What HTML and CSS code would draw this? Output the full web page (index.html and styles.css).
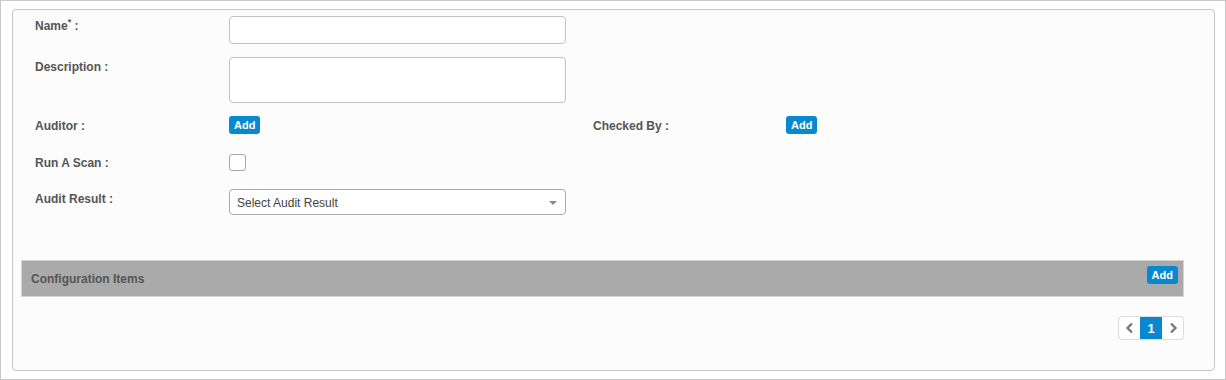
FILE: index.html
```html
<!DOCTYPE html>
<html lang="en">
<head>
  <meta charset="UTF-8">
  <title>Audit</title>
  <link rel="stylesheet" href="styles.css">
</head>
<body>
  <div class="page">
    <div class="panel">
      <!-- Audit form -->
      <div class="form-row row-name">
        <label class="label">Name<sup>*</sup> :</label>
        <input type="text" class="input">
      </div>
      <div class="form-row row-desc">
        <label class="label">Description :</label>
        <textarea class="input textarea"></textarea>
      </div>
      <div class="form-row row-center row-people">
        <label class="label">Auditor :</label>
        <div class="control"><button class="btn-add">Add</button></div>
        <label class="label">Checked By :</label>
        <div class="control"><button class="btn-add">Add</button></div>
      </div>
      <div class="form-row row-center row-scan">
        <label class="label">Run A Scan :</label>
        <div class="control"><span class="checkbox"></span></div>
      </div>
      <div class="form-row row-result">
        <label class="label">Audit Result :</label>
        <div class="select">
          <span>Select Audit Result</span>
          <span class="caret"></span>
        </div>
      </div>

      <!-- Configuration items grid -->
      <div class="grid-header">
        <span class="grid-title">Configuration Items</span>
        <button class="btn-add">Add</button>
      </div>
      <div class="pager-wrap">
        <div class="pager">
          <span class="pager-cell">
            <svg width="10" height="12" viewBox="0 0 10 12"><path d="M7 1.5 2.5 6 7 10.5" fill="none" stroke="#7a7a7a" stroke-width="2.4"/></svg>
          </span>
          <span class="pager-cell active">1</span>
          <span class="pager-cell">
            <svg width="10" height="12" viewBox="0 0 10 12"><path d="M3 1.5 7.5 6 3 10.5" fill="none" stroke="#7a7a7a" stroke-width="2.4"/></svg>
          </span>
        </div>
      </div>
    </div>
  </div>
</body>
</html>
```

FILE: styles.css
```css
body {
  margin: 0;
  padding: 0;
  font-family: "Liberation Sans", Arial, sans-serif;
  font-size: 12px;
  color: #555;
  background-color: #fff;
}
.page {
  height: 380px;
  box-sizing: border-box;
  border: 1px solid #c8c8c8;
  padding: 8px 10px 8px 11px;
}
.panel {
  height: 100%;
  box-sizing: border-box;
  border: 1px solid #c6c6c6;
  border-radius: 4px;
  background-color: #fcfcfc;
  padding: 6px 30px 0 8px;
}
.form-row {
  display: grid;
  grid-template-columns: 194px 364px 193px 1fr;
  align-items: start;
  padding-left: 14px;
  margin-bottom: 13px;
}
.row-center {
  align-items: center;
}
.label {
  font-weight: bold;
  line-height: 17px;
  padding-top: 2px;
}
.row-center .label {
  line-height: 15px;
  padding-top: 2px;
}
.label sup {
  font-size: 9px;
  line-height: 0;
  vertical-align: 5px;
  color: #6a4a44;
}
.input {
  width: 337px;
  height: 28px;
  box-sizing: border-box;
  border: 1px solid #c2c2c2;
  border-radius: 4px;
  background: #fff;
  margin: 0;
  font-family: inherit;
}
.textarea {
  height: 46px;
  resize: none;
}
.row-people {
  height: 18px;
}
.control {
  display: flex;
  align-items: center;
}
.btn-add {
  height: 18px;
  padding: 0 5px;
  border: none;
  border-radius: 3px;
  background-color: #0a88cf;
  color: #fff;
  font-family: inherit;
  font-size: 11px;
  font-weight: bold;
  line-height: 18px;
  cursor: pointer;
}
.row-scan {
  padding-top: 7px;
  margin-bottom: 18px;
}
.checkbox {
  display: block;
  width: 17px;
  height: 17px;
  box-sizing: border-box;
  border: 1px solid #a8a8a8;
  border-radius: 3px;
  background: #fff;
}
.select {
  width: 337px;
  height: 26px;
  box-sizing: border-box;
  border: 1px solid #a9a9a9;
  border-radius: 4px;
  background: #fff;
  display: flex;
  align-items: center;
  justify-content: space-between;
  padding: 1px 8px 0 7px;
  color: #444;
  font-size: 12px;
}
.caret {
  width: 0;
  height: 0;
  border-left: 4px solid transparent;
  border-right: 4px solid transparent;
  border-top: 4px solid #888;
}
.grid-header {
  margin-top: 45px;
  height: 37px;
  box-sizing: border-box;
  border: 1px solid #d4d4d4;
  background-color: #aaaaaa;
  display: flex;
  align-items: flex-start;
  justify-content: space-between;
  padding: 5px 5px 0 9px;
}
.grid-title {
  font-weight: bold;
  line-height: 26px;
}
.pager-wrap {
  display: flex;
  justify-content: flex-end;
  margin-top: 19px;
}
.pager {
  display: flex;
  border: 1px solid #dcdcdc;
  border-radius: 4px;
  background: #fff;
  overflow: hidden;
}
.pager-cell {
  width: 21px;
  height: 22px;
  display: flex;
  align-items: center;
  justify-content: center;
  font-weight: bold;
  color: #777;
}
.pager-cell.active {
  width: 22px;
  background-color: #0a88cf;
  color: #fff;
  font-size: 13px;
}
```
